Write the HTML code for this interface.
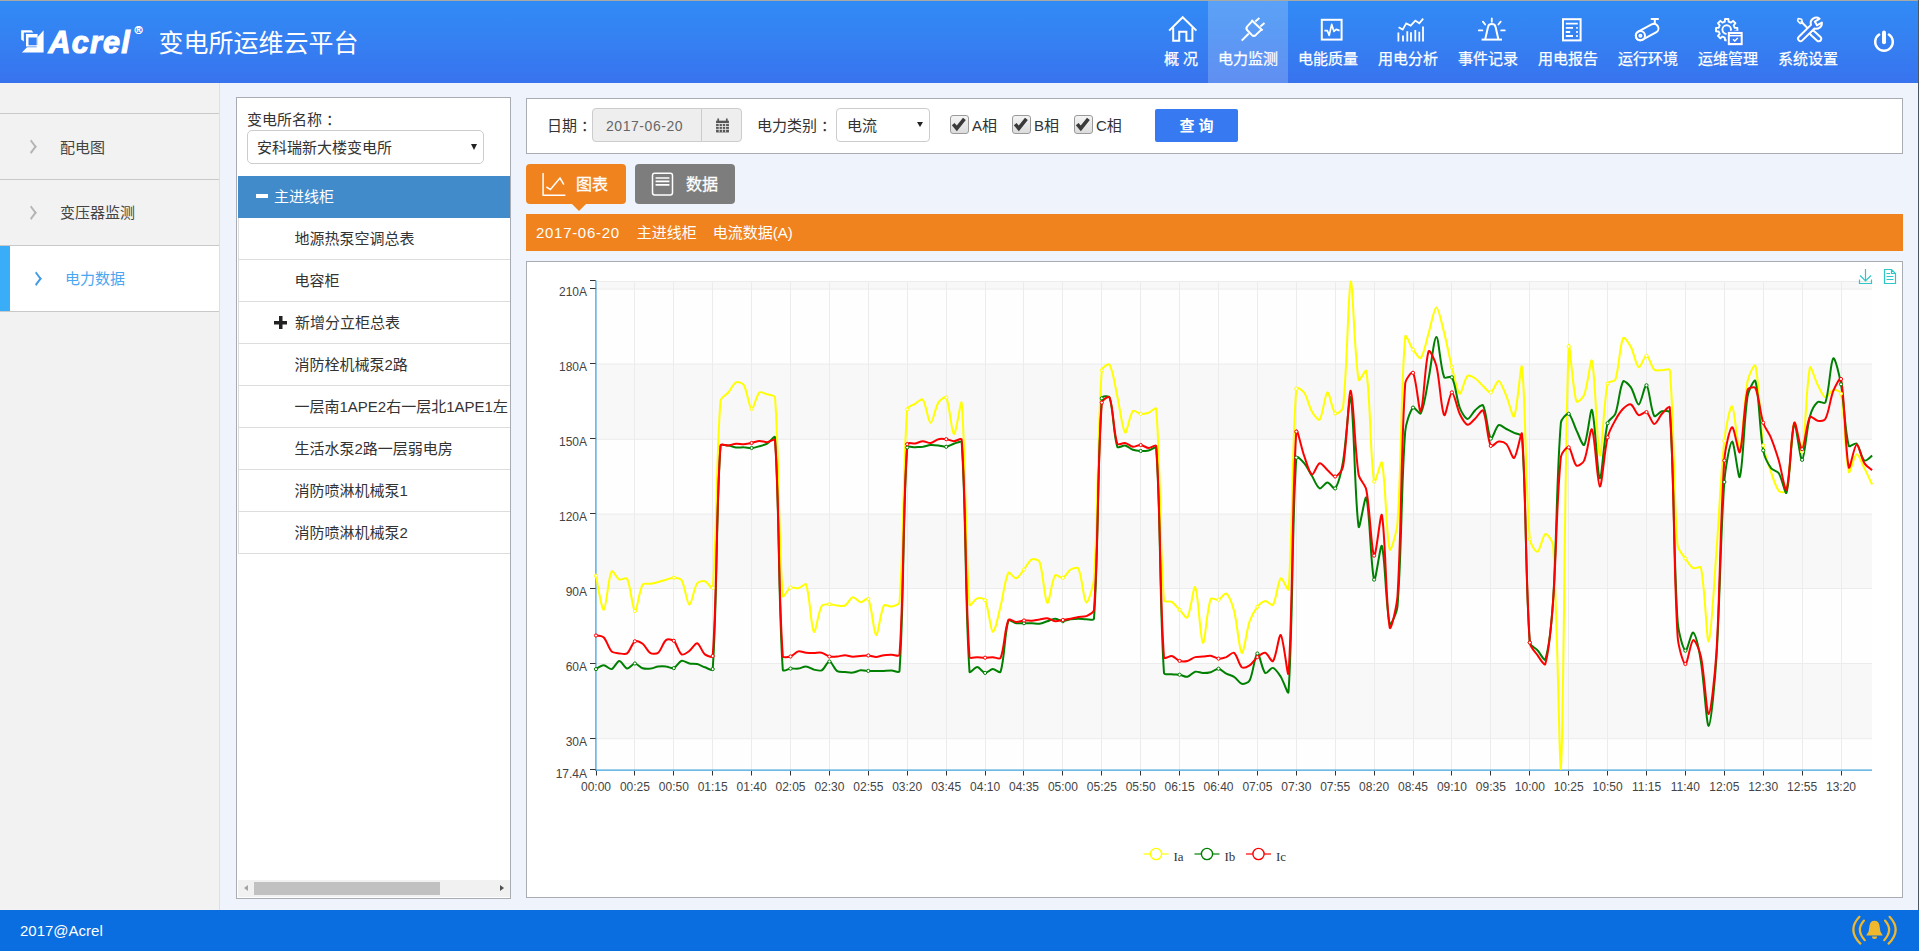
<!DOCTYPE html>
<html lang="zh-CN">
<head>
<meta charset="utf-8">
<title>变电所运维云平台</title>
<style>
*{box-sizing:border-box;margin:0;padding:0}
html,body{width:1919px;height:951px;overflow:hidden;background:#eff3fb}
body{font-family:"Liberation Sans","Noto Sans CJK SC",sans-serif;color:#333;font-size:15px}
#page{position:relative;width:1919px;height:951px;overflow:hidden;background:#eff3fb}
#header{position:absolute;left:0;top:0;width:1919px;height:83px;background:linear-gradient(180deg,#318bf5 0%,#3580f2 50%,#3873ee 100%)}
#topline{position:absolute;left:0;top:0;width:1919px;height:1px;background:#a9a9a4}
#logo{position:absolute;left:21px;top:0;height:83px;width:130px}
#logo svg{position:absolute;left:0;top:30px}
#logo .acrel{position:absolute;left:27.5px;top:22.8px;font:italic bold 30.6px/38px "Liberation Sans",sans-serif;color:#fff;letter-spacing:1.2px;-webkit-text-stroke:1.1px #fff}
#logo .reg{position:absolute;left:113.4px;top:22.4px;font:11px/16px "Liberation Sans",sans-serif;color:#fff;-webkit-text-stroke:0.35px #fff}
#title{position:absolute;left:158.5px;top:24.6px;font-size:25px;line-height:36px;color:#fff;white-space:nowrap}
.nav-item{position:absolute;top:1px;width:80px;height:82px;color:#fff;text-align:center}
.nav-item.active{background:rgba(255,255,255,0.2)}
.nav-ico{position:absolute;left:0;top:12px;width:100%;height:34px}
.nav-ico svg{display:block;margin:0 auto}
.nav-txt{position:absolute;left:0;top:47px;width:100%;-webkit-text-stroke:0.25px #fff;font-size:15px;line-height:22px;white-space:nowrap}
#power{position:absolute;left:1871px;top:29px;width:26px;height:26px}

#sidebar{position:absolute;left:0;top:83px;width:220px;height:827px;background:#f2f2f2;border-right:1px solid #dcdfe6}
.sitem{position:absolute;left:0;width:219px;height:66px;border-bottom:1px solid #c9c9c9}
.sitem:first-child{border-top:1px solid #c9c9c9;height:67px;top:30px !important}
.sitem:first-child .stxt{top:23px}
.sitem:first-child .chev{top:28px}
.sitem .stxt{position:absolute;left:60px;top:22px;font-size:15px;line-height:22px;color:#444;white-space:nowrap}
.sitem .chev{position:absolute;left:27px;top:27.5px;width:8.5px;height:8.5px;border-top:2.4px solid #b4b4b4;border-right:2.4px solid #b4b4b4;transform:rotate(45deg) skew(8deg,8deg)}
.sitem.act{background:#fff}
.sitem.act .sbar{position:absolute;left:0;top:0;width:10px;height:65px;background:#3aadf8}
.sitem.act .stxt{left:65px;color:#4aa6f0}
.sitem.act .chev{left:32px;border-color:#3f9be6}

#treepanel{position:absolute;left:236px;top:97px;width:275px;height:802px;background:#fff;border:1px solid #a9acb2;overflow:hidden}
.tlabel{position:absolute;left:10px;top:11px;font-size:15px;line-height:22px;color:#333;white-space:nowrap}
.tselect{position:absolute;left:10px;top:32px;width:237px;height:34px;border:1px solid #ccc;border-radius:5px;background:#fff}
.tselect span{position:absolute;left:9px;top:6px;font-size:15px;line-height:22px;color:#333;white-space:nowrap}
.caret{position:absolute;width:0;height:0;border-left:3.5px solid transparent;border-right:3.5px solid transparent;border-top:6px solid #222}
.tselect .caret{left:223px;top:13px}
.trow{position:absolute;left:1px;width:273px;height:42px;border-bottom:1px solid #ddd;border-left:1px solid #ddd;background:#fff}
.trow{top:0}
.trow.sel{background:#428bca;border-color:#428bca;color:#fff}
.trow .ttxt{position:absolute;top:10px;font-size:15px;line-height:22px;white-space:nowrap;color:#333}
.trow.sel .ttxt{color:#fff}
.tminus{position:absolute;left:17px;top:18px;width:12px;height:4px;background:#fff}
.tplus{position:absolute;left:35px;top:14px;width:13px;height:13px;background:
 linear-gradient(#222,#222) 0 5px/13px 3.5px no-repeat,
 linear-gradient(#222,#222) 5px 0/3.5px 13px no-repeat}
.hscroll{position:absolute;left:1px;top:782px;width:272px;height:17px;background:#f1f1f1}
.hscroll .thumb{position:absolute;left:16px;top:2px;width:186px;height:13px;background:#c1c1c1}
.hscroll .arl{position:absolute;left:6px;top:5px;width:0;height:0;border-top:3.5px solid transparent;border-bottom:3.5px solid transparent;border-right:4px solid #a3a3a3}
.hscroll .arr{position:absolute;left:262px;top:5px;width:0;height:0;border-top:3.5px solid transparent;border-bottom:3.5px solid transparent;border-left:4px solid #505050}

#filter{position:absolute;left:526px;top:98px;width:1377px;height:56px;background:#fff;border:1px solid #a9acb2}
.flabel{position:absolute;top:16px;font-size:15px;line-height:22px;color:#333;white-space:nowrap}
.dateinp{position:absolute;left:65px;top:9px;width:110px;height:34px;background:#eee;border:1px solid #ccc;border-radius:4px 0 0 4px}
.dateinp span{position:absolute;left:13px;top:7px;font-size:14px;line-height:20px;color:#666;letter-spacing:0.55px;white-space:nowrap}
.datebtn{position:absolute;left:174px;top:9px;width:41px;height:34px;background:#eee;border:1px solid #ccc;border-radius:0 4px 4px 0}
.datebtn svg{position:absolute;left:12.5px;top:9px}
.typesel{position:absolute;left:309px;top:9px;width:94px;height:34px;background:#fff;border:1px solid #ccc;border-radius:4px}
.typesel span{position:absolute;left:10px;top:6px;font-size:15px;line-height:22px;color:#333}
.typesel .caret{left:80px;top:13px;border-left-width:3px;border-right-width:3px;border-top-width:5.5px}
.cb{position:absolute;top:16px;width:19px;height:19px;border:1px solid #9a9a9a;border-radius:3px;background:linear-gradient(#f4f4f4,#dcdcdc)}
.cb svg{position:absolute;left:-1px;top:-1px}
.cblabel{position:absolute;top:16px;font-size:15px;line-height:22px;color:#333;white-space:nowrap}
.qbtn{position:absolute;left:628px;top:10px;width:83px;height:33px;background:#3679f0;border-radius:2px;color:#fff;font-size:15px;line-height:33px;text-align:center;font-weight:bold;white-space:pre}

.tab{position:absolute;top:164px;width:100px;height:40px;border-radius:4px;color:#fff}
.tab1{left:526px;background:#f0831e}
.tab2{left:635px;background:#7d7d7d}
.tab svg{position:absolute;top:8px}
.tab1 svg{left:15px}
.tab2 svg{left:16px}
.tab span{position:absolute;top:10px;-webkit-text-stroke:0.3px #fff;font-size:16px;line-height:22px;white-space:nowrap}
.tab1 span{left:50px}
.tab2 span{left:51px}
.tabarrow{position:absolute;left:572px;top:204px;width:0;height:0;border-left:7px solid transparent;border-right:7px solid transparent;border-top:7px solid #f0831e}
#obar{position:absolute;left:526px;top:214px;width:1377px;height:37px;background:#f0831e;color:#fff;font-size:15px;line-height:37px;padding-left:10px;white-space:nowrap}
#chartpanel{position:absolute;left:526px;top:261px;width:1377px;height:637px;background:#fff;border:1px solid #a9acb2}
#chartpanel svg{position:absolute;left:-1px;top:-1px}
#footer{position:absolute;left:0;top:910px;width:1919px;height:41px;background:#0a6de0}
#footer .copy{position:absolute;left:20px;top:10px;font-size:15px;line-height:22px;color:#fff}
#bell{position:absolute;left:1850px;top:4px;width:50px;height:36px}

#rline{position:absolute;left:1918px;top:0;width:1px;height:951px;background:#4b5661}

</style>
</head>
<body>
<div id="page">
  <div id="header">
    <div id="topline"></div>
    <div id="logo"><svg width="24" height="24" viewBox="0 0 24 24"><path d="M0.2,0.2 H10.4 L12.4,2.6 H2.8 V11.6 L0.2,9.4 Z" fill="#fff"/><path d="M5,4 H16.6 V16.4 H5 Z M7.5,7.5 V15.3 H15.7 V7.5 Z" fill="#fff" fill-rule="evenodd"/><path d="M22.6,0.2 V22.6 H0.9 L6,17.3 H15.7 V15.3 H16.6 V7.2 Z" fill="#fff"/></svg><span class="acrel">Acrel</span><span class="reg">®</span></div>
    <div id="title">变电所运维云平台</div>
    <div class="nav-item" style="left:1154px;width:54px"><div class="nav-ico"><svg width="40" height="34" viewBox="0 0 40 34" fill="none" stroke="#fff" stroke-width="2" stroke-linecap="butt" stroke-linejoin="miter"><path d="M8.9,16.9 L21.7,4.2 L34.7,16.9" stroke-linecap="square"/><path d="M12.2,14.5 V27.7 H18.2 V18.8 H25.4 V27.7 H31.4 V14.5"/></svg></div><div class="nav-txt">概 况</div></div>
<div class="nav-item active" style="left:1208px;width:80px"><div class="nav-ico"><svg width="40" height="34" viewBox="0 0 40 34" fill="none" stroke="#fff" stroke-width="2" stroke-linecap="butt" stroke-linejoin="miter"><path d="M13.7,27.6 L20.8,20.5" stroke-linecap="butt"/><path d="M23.4,7 L34.6,17.4" stroke-linecap="butt"/><path d="M24.4,7.8 L19.3,13.4 Q17.5,15.4 19.3,17.3 L23.8,21.9 Q25.8,23.8 27.9,21.9 L33.6,16.4" stroke-linejoin="round"/><path d="M27.3,8.5 L31.4,5 M32.4,13.5 L36.5,10" stroke-linecap="butt"/></svg></div><div class="nav-txt">电力监测</div></div>
<div class="nav-item" style="left:1288px;width:80px"><div class="nav-ico"><svg width="40" height="34" viewBox="0 0 40 34" fill="none" stroke="#fff" stroke-width="2" stroke-linecap="butt" stroke-linejoin="miter"><rect x="13.8" y="6.8" width="19.8" height="19.8"/><path d="M16.4,17.6 H19.3 L21.2,22.4 L23.7,11.4 L26,18.4 L28.2,16.4 L31.6,17.6" stroke-width="1.7" stroke-linejoin="round"/></svg></div><div class="nav-txt">电能质量</div></div>
<div class="nav-item" style="left:1368px;width:80px"><div class="nav-ico"><svg width="40" height="34" viewBox="0 0 40 34" fill="none" stroke="#fff" stroke-width="2" stroke-linecap="butt" stroke-linejoin="miter"><path d="M10.4,28.6 V19.4 M15,28.6 V22.6 M19.3,28.6 V18.2 M23,28.6 V19.2 M27.3,28.6 V17 M31.3,28.6 V18.8 M35,28.6 V13.4" stroke-width="1.8"/><path d="M10.6,14.2 L14.7,16.6 L18.2,10.4 L22.7,12.6 L27.3,7.6 L31.3,10.3 L35.2,5.6" stroke-width="1.8"/></svg></div><div class="nav-txt">用电分析</div></div>
<div class="nav-item" style="left:1448px;width:80px"><div class="nav-ico"><svg width="40" height="34" viewBox="0 0 40 34" fill="none" stroke="#fff" stroke-width="2" stroke-linecap="butt" stroke-linejoin="miter"><path d="M13.6,26.6 H34"/><path d="M17.2,26.4 L20,14 Q20.4,11 23.8,11 Q27.2,11 27.6,14 L30.4,26.4" /><path d="M23.8,5.4 V8.8 M14.9,8.6 L17.2,11.5 M32.7,8.6 L30.4,11.5 M10.8,17.4 H14.4 M33.2,17.4 H36.8" stroke-width="1.8" stroke-linecap="round"/></svg></div><div class="nav-txt">事件记录</div></div>
<div class="nav-item" style="left:1528px;width:80px"><div class="nav-ico"><svg width="40" height="34" viewBox="0 0 40 34" fill="none" stroke="#fff" stroke-width="2" stroke-linecap="butt" stroke-linejoin="miter"><rect x="15" y="6.2" width="17.6" height="21.2"/><path d="M17.8,10.6 H29.8 M17.8,14.9 H25 M28.2,14.9 H29.8 M17.8,19 H22.2 M28.2,19 H29.8 M17.8,23 H25 M28.2,23 H29.8" stroke-width="1.8"/></svg></div><div class="nav-txt">用电报告</div></div>
<div class="nav-item" style="left:1608px;width:80px"><div class="nav-ico"><svg width="40" height="34" viewBox="0 0 40 34" fill="none" stroke="#fff" stroke-width="2" stroke-linecap="butt" stroke-linejoin="miter"><path d="M14.60,26.74 L28.00,19.44 A4.6,4.6 0 0 0 23.60,11.36 L10.20,18.66 A4.6,4.6 0 0 0 14.60,26.74Z"/><circle cx="12.4" cy="22.7" r="4.6"/><circle cx="12.4" cy="22.7" r="1.1" stroke-width="1.8"/><path d="M26.8,11.2 V5.9 M22.8,5.9 H30.8"/></svg></div><div class="nav-txt">运行环境</div></div>
<div class="nav-item" style="left:1688px;width:80px"><div class="nav-ico"><svg width="40" height="36" viewBox="0 0 40 36" fill="none" stroke="#fff" stroke-width="2" stroke-linecap="butt" stroke-linejoin="miter"><path d="M26.67,14.69 L29.37,14.91 L29.37,18.29 L26.67,18.51 L25.69,20.88 L27.44,22.95 L25.05,25.34 L22.98,23.59 L20.61,24.57 L20.39,27.27 L17.01,27.27 L16.79,24.57 L14.42,23.59 L12.35,25.34 L9.96,22.95 L11.71,20.88 L10.73,18.51 L8.03,18.29 L8.03,14.91 L10.73,14.69 L11.71,12.32 L9.96,10.25 L12.35,7.86 L14.42,9.61 L16.79,8.63 L17.01,5.93 L20.39,5.93 L20.61,8.63 L22.98,9.61 L25.05,7.86 L27.44,10.25 L25.69,12.32Z" stroke-width="1.9" stroke-linejoin="round"/><circle cx="18.7" cy="16.6" r="4.3" stroke-width="1.9"/><rect x="18.6" y="17.8" width="17.3" height="15.6" fill="#3979f1" stroke="none"/><rect x="19.8" y="18.9" width="14.9" height="13.3" fill="#fff" stroke="none"/><rect x="21.8" y="21" width="10.9" height="0.9" fill="#3979f1" stroke="none"/><rect x="21.8" y="23.4" width="10.9" height="6.6" fill="#3979f1" stroke="none"/><path d="M25,26.2 L26.8,28 L29.8,24.9" stroke-width="1.5"/></svg></div><div class="nav-txt">运维管理</div></div>
<div class="nav-item" style="left:1768px;width:80px"><div class="nav-ico"><svg width="40" height="34" viewBox="0 0 40 34" fill="none" stroke="#fff" stroke-width="2" stroke-linecap="butt" stroke-linejoin="miter"><path d="M22.92,22.06 L29.12,27.66 A2.5,2.5 0 0 0 32.48,23.94 L26.28,18.34 A2.5,2.5 0 0 0 22.92,22.06Z"/><path d="M22.6,18.2 L12.8,8.2" stroke-width="2"/><path d="M10.2,5.4 L13.6,6.2 L14.6,9.6 L12.4,10.6 L9.6,7.8 Z" stroke-width="1.5" stroke-linejoin="round"/><path d="M31.66,5.72 A5.6,5.6 0 0 0 22.99,11.9 L10.85,23.8 A2.5,2.5 0 0 0 14.35,27.39 L26.49,15.49 A5.6,5.6 0 0 0 33.86,9.53 L28.97,12.35 L26.77,8.55 Z" fill="#3a7af2" stroke-linejoin="round"/></svg></div><div class="nav-txt">系统设置</div></div>
    <div id="power"><svg width="26" height="26" viewBox="0 0 26 26" fill="none" stroke="#fff"><path d="M8.2,5.6 A8.8,8.8 0 1 0 17.8,5.6" stroke-width="2.4" stroke-linecap="round"/><path d="M13,3.4 V13.2" stroke-width="4" stroke-linecap="round"/></svg></div>
  </div>

  <div id="sidebar">
    <div class="sitem" style="top:31px"><span class="chev"></span><span class="stxt">配电图</span></div>
    <div class="sitem" style="top:97px"><span class="chev"></span><span class="stxt">变压器监测</span></div>
    <div class="sitem act" style="top:163px"><span class="sbar"></span><span class="chev"></span><span class="stxt">电力数据</span></div>
  </div>

  <div id="treepanel">
    <div class="tlabel">变电所名称<span style="margin-left:4px">：</span></div>
    <div class="tselect"><span>安科瑞新大楼变电所</span><i class="caret"></i></div>
    <div class="trow sel" style="top:78px"><span class="tminus"></span><span class="ttxt" style="left:35px">主进线柜</span></div>
<div class="trow" style="top:120px"><span class="ttxt" style="left:55.5px">地源热泵空调总表</span></div>
<div class="trow" style="top:162px"><span class="ttxt" style="left:55.5px">电容柜</span></div>
<div class="trow" style="top:204px"><span class="tplus"></span><span class="ttxt" style="left:56px">新增分立柜总表</span></div>
<div class="trow" style="top:246px"><span class="ttxt" style="left:55.5px">消防栓机械泵2路</span></div>
<div class="trow" style="top:288px"><span class="ttxt" style="left:55.5px">一层南1APE2右一层北1APE1左</span></div>
<div class="trow" style="top:330px"><span class="ttxt" style="left:55.5px">生活水泵2路一层弱电房</span></div>
<div class="trow" style="top:372px"><span class="ttxt" style="left:55.5px">消防喷淋机械泵1</span></div>
<div class="trow" style="top:414px"><span class="ttxt" style="left:55.5px">消防喷淋机械泵2</span></div>
    <div class="hscroll"><i class="arl"></i><b class="thumb"></b><i class="arr"></i></div>
  </div>

  <div id="filter">
    <span class="flabel" style="left:20px">日期<span style="margin-left:4px">：</span></span>
    <div class="dateinp"><span>2017-06-20</span></div>
    <div class="datebtn"><svg width="15" height="15" viewBox="0 0 14 14"><path d="M1 2.5h12v11H1z" fill="#555"/><path d="M3 0.5v3M11 0.5v3" stroke="#555" stroke-width="1.6"/><path d="M1 5.2h12" stroke="#eee" stroke-width="0.9"/><path d="M3.9 5.2v8M6.9 5.2v8M9.9 5.2v8M1 7.9h12M1 10.6h12" stroke="#eee" stroke-width="0.8"/></svg></div>
    <span class="flabel" style="left:230px">电力类别<span style="margin-left:4px">：</span></span>
    <div class="typesel"><span>电流</span><i class="caret"></i></div>
    <span class="cb" style="left:423px"><svg width="18" height="18" viewBox="0 0 18 18"><path d="M3.2 9.2l3.6 4.2 7.6-9.6" fill="none" stroke="#3a3a3a" stroke-width="3.6"/></svg></span><span class="cblabel" style="left:445px">A相</span>
    <span class="cb" style="left:485px"><svg width="18" height="18" viewBox="0 0 18 18"><path d="M3.2 9.2l3.6 4.2 7.6-9.6" fill="none" stroke="#3a3a3a" stroke-width="3.6"/></svg></span><span class="cblabel" style="left:507px">B相</span>
    <span class="cb" style="left:547px"><svg width="18" height="18" viewBox="0 0 18 18"><path d="M3.2 9.2l3.6 4.2 7.6-9.6" fill="none" stroke="#3a3a3a" stroke-width="3.6"/></svg></span><span class="cblabel" style="left:569px">C相</span>
    <div class="qbtn">查 询</div>
  </div>

  <div class="tab tab1"><svg width="26" height="25" viewBox="0 0 26 25"><path d="M2.1,1V23.3H24.4" fill="none" stroke="#fff" stroke-width="1.5"/><path d="M5.4,15L9.4,17.6L19,6L22.9,12.6" fill="none" stroke="#fff" stroke-width="1.5"/></svg><span>图表</span></div>
  <div class="tabarrow"></div>
  <div class="tab tab2"><svg width="23" height="25" viewBox="0 0 23 25"><rect x="1.5" y="1.2" width="20" height="21.8" rx="2.2" fill="none" stroke="#fff" stroke-width="1.5"/><path d="M4.6,6H18.4M4.6,9.4H18.4M4.6,12.8H18.4" stroke="#fff" stroke-width="1.7"/></svg><span>数据</span></div>

  <div id="obar"><span style="letter-spacing:0.7px">2017-06-20</span><span style="margin-left:17px">主进线柜</span><span style="margin-left:16px">电流数据(A)</span></div>

  <div id="chartpanel">
<svg width="1377" height="637" viewBox="526 261 1377 637" font-family="'Liberation Sans','Noto Sans CJK SC',sans-serif" font-size="12">
<rect x="596" y="281.00" width="1276" height="8.10" fill="#f8f8f8"/>
<rect x="596" y="289.10" width="1276" height="75.00" fill="#fefefe"/>
<rect x="596" y="364.10" width="1276" height="75.20" fill="#f8f8f8"/>
<rect x="596" y="439.30" width="1276" height="74.80" fill="#fefefe"/>
<rect x="596" y="514.10" width="1276" height="74.40" fill="#f8f8f8"/>
<rect x="596" y="588.50" width="1276" height="75.00" fill="#fefefe"/>
<rect x="596" y="663.50" width="1276" height="75.20" fill="#f8f8f8"/>
<rect x="596" y="738.70" width="1276" height="31.30" fill="#fefefe"/>
<path d="M596,289.10H1872" stroke="#ececec" stroke-width="1"/>
<path d="M596,364.10H1872" stroke="#ececec" stroke-width="1"/>
<path d="M596,439.30H1872" stroke="#ececec" stroke-width="1"/>
<path d="M596,514.10H1872" stroke="#ececec" stroke-width="1"/>
<path d="M596,588.50H1872" stroke="#ececec" stroke-width="1"/>
<path d="M596,663.50H1872" stroke="#ececec" stroke-width="1"/>
<path d="M596,738.70H1872" stroke="#ececec" stroke-width="1"/>
<path d="M596,281.5H1872" stroke="#ececec" stroke-width="1"/>
<path d="M634.5,281V770" stroke="#ececec" stroke-width="1"/>
<path d="M673.5,281V770" stroke="#ececec" stroke-width="1"/>
<path d="M712.5,281V770" stroke="#ececec" stroke-width="1"/>
<path d="M751.5,281V770" stroke="#ececec" stroke-width="1"/>
<path d="M790.5,281V770" stroke="#ececec" stroke-width="1"/>
<path d="M829.5,281V770" stroke="#ececec" stroke-width="1"/>
<path d="M868.5,281V770" stroke="#ececec" stroke-width="1"/>
<path d="M907.5,281V770" stroke="#ececec" stroke-width="1"/>
<path d="M946.5,281V770" stroke="#ececec" stroke-width="1"/>
<path d="M985.5,281V770" stroke="#ececec" stroke-width="1"/>
<path d="M1023.5,281V770" stroke="#ececec" stroke-width="1"/>
<path d="M1062.5,281V770" stroke="#ececec" stroke-width="1"/>
<path d="M1101.5,281V770" stroke="#ececec" stroke-width="1"/>
<path d="M1140.5,281V770" stroke="#ececec" stroke-width="1"/>
<path d="M1179.5,281V770" stroke="#ececec" stroke-width="1"/>
<path d="M1218.5,281V770" stroke="#ececec" stroke-width="1"/>
<path d="M1257.5,281V770" stroke="#ececec" stroke-width="1"/>
<path d="M1296.5,281V770" stroke="#ececec" stroke-width="1"/>
<path d="M1335.5,281V770" stroke="#ececec" stroke-width="1"/>
<path d="M1374.5,281V770" stroke="#ececec" stroke-width="1"/>
<path d="M1413.5,281V770" stroke="#ececec" stroke-width="1"/>
<path d="M1451.5,281V770" stroke="#ececec" stroke-width="1"/>
<path d="M1490.5,281V770" stroke="#ececec" stroke-width="1"/>
<path d="M1529.5,281V770" stroke="#ececec" stroke-width="1"/>
<path d="M1568.5,281V770" stroke="#ececec" stroke-width="1"/>
<path d="M1607.5,281V770" stroke="#ececec" stroke-width="1"/>
<path d="M1646.5,281V770" stroke="#ececec" stroke-width="1"/>
<path d="M1685.5,281V770" stroke="#ececec" stroke-width="1"/>
<path d="M1724.5,281V770" stroke="#ececec" stroke-width="1"/>
<path d="M1763.5,281V770" stroke="#ececec" stroke-width="1"/>
<path d="M1802.5,281V770" stroke="#ececec" stroke-width="1"/>
<path d="M1841.5,281V770" stroke="#ececec" stroke-width="1"/>
<path d="M595.9,280.5V771" stroke="#3f9fdc" stroke-width="1.25"/>
<path d="M595,770H1872" stroke="#3f9fdc" stroke-width="1.25"/>
<path d="M590,288.50H595.6" stroke="#333" stroke-width="1"/>
<text x="587" y="296.30" text-anchor="end" fill="#444">210A</text>
<path d="M590,363.50H595.6" stroke="#333" stroke-width="1"/>
<text x="587" y="371.33" text-anchor="end" fill="#444">180A</text>
<path d="M590,438.50H595.6" stroke="#333" stroke-width="1"/>
<text x="587" y="446.36" text-anchor="end" fill="#444">150A</text>
<path d="M590,513.50H595.6" stroke="#333" stroke-width="1"/>
<text x="587" y="521.39" text-anchor="end" fill="#444">120A</text>
<path d="M590,588.50H595.6" stroke="#333" stroke-width="1"/>
<text x="587" y="596.42" text-anchor="end" fill="#444">90A</text>
<path d="M590,663.50H595.6" stroke="#333" stroke-width="1"/>
<text x="587" y="671.45" text-anchor="end" fill="#444">60A</text>
<path d="M590,738.50H595.6" stroke="#333" stroke-width="1"/>
<text x="587" y="746.48" text-anchor="end" fill="#444">30A</text>
<path d="M590,769.50H595.6" stroke="#333" stroke-width="1"/>
<text x="587" y="777.60" text-anchor="end" fill="#444">17.4A</text>
<path d="M590,280.5H595.6" stroke="#333" stroke-width="1"/>
<path d="M596.5,771V775.5" stroke="#333" stroke-width="1"/>
<text x="596.0" y="791" text-anchor="middle" fill="#444">00:00</text>
<path d="M634.5,771V775.5" stroke="#333" stroke-width="1"/>
<text x="634.9" y="791" text-anchor="middle" fill="#444">00:25</text>
<path d="M673.5,771V775.5" stroke="#333" stroke-width="1"/>
<text x="673.8" y="791" text-anchor="middle" fill="#444">00:50</text>
<path d="M712.5,771V775.5" stroke="#333" stroke-width="1"/>
<text x="712.7" y="791" text-anchor="middle" fill="#444">01:15</text>
<path d="M751.5,771V775.5" stroke="#333" stroke-width="1"/>
<text x="751.6" y="791" text-anchor="middle" fill="#444">01:40</text>
<path d="M790.5,771V775.5" stroke="#333" stroke-width="1"/>
<text x="790.5" y="791" text-anchor="middle" fill="#444">02:05</text>
<path d="M829.5,771V775.5" stroke="#333" stroke-width="1"/>
<text x="829.4" y="791" text-anchor="middle" fill="#444">02:30</text>
<path d="M868.5,771V775.5" stroke="#333" stroke-width="1"/>
<text x="868.3" y="791" text-anchor="middle" fill="#444">02:55</text>
<path d="M907.5,771V775.5" stroke="#333" stroke-width="1"/>
<text x="907.2" y="791" text-anchor="middle" fill="#444">03:20</text>
<path d="M946.5,771V775.5" stroke="#333" stroke-width="1"/>
<text x="946.2" y="791" text-anchor="middle" fill="#444">03:45</text>
<path d="M985.5,771V775.5" stroke="#333" stroke-width="1"/>
<text x="985.1" y="791" text-anchor="middle" fill="#444">04:10</text>
<path d="M1023.5,771V775.5" stroke="#333" stroke-width="1"/>
<text x="1024.0" y="791" text-anchor="middle" fill="#444">04:35</text>
<path d="M1062.5,771V775.5" stroke="#333" stroke-width="1"/>
<text x="1062.9" y="791" text-anchor="middle" fill="#444">05:00</text>
<path d="M1101.5,771V775.5" stroke="#333" stroke-width="1"/>
<text x="1101.8" y="791" text-anchor="middle" fill="#444">05:25</text>
<path d="M1140.5,771V775.5" stroke="#333" stroke-width="1"/>
<text x="1140.7" y="791" text-anchor="middle" fill="#444">05:50</text>
<path d="M1179.5,771V775.5" stroke="#333" stroke-width="1"/>
<text x="1179.6" y="791" text-anchor="middle" fill="#444">06:15</text>
<path d="M1218.5,771V775.5" stroke="#333" stroke-width="1"/>
<text x="1218.5" y="791" text-anchor="middle" fill="#444">06:40</text>
<path d="M1257.5,771V775.5" stroke="#333" stroke-width="1"/>
<text x="1257.4" y="791" text-anchor="middle" fill="#444">07:05</text>
<path d="M1296.5,771V775.5" stroke="#333" stroke-width="1"/>
<text x="1296.3" y="791" text-anchor="middle" fill="#444">07:30</text>
<path d="M1335.5,771V775.5" stroke="#333" stroke-width="1"/>
<text x="1335.2" y="791" text-anchor="middle" fill="#444">07:55</text>
<path d="M1374.5,771V775.5" stroke="#333" stroke-width="1"/>
<text x="1374.1" y="791" text-anchor="middle" fill="#444">08:20</text>
<path d="M1413.5,771V775.5" stroke="#333" stroke-width="1"/>
<text x="1413.0" y="791" text-anchor="middle" fill="#444">08:45</text>
<path d="M1451.5,771V775.5" stroke="#333" stroke-width="1"/>
<text x="1451.9" y="791" text-anchor="middle" fill="#444">09:10</text>
<path d="M1490.5,771V775.5" stroke="#333" stroke-width="1"/>
<text x="1490.8" y="791" text-anchor="middle" fill="#444">09:35</text>
<path d="M1529.5,771V775.5" stroke="#333" stroke-width="1"/>
<text x="1529.8" y="791" text-anchor="middle" fill="#444">10:00</text>
<path d="M1568.5,771V775.5" stroke="#333" stroke-width="1"/>
<text x="1568.7" y="791" text-anchor="middle" fill="#444">10:25</text>
<path d="M1607.5,771V775.5" stroke="#333" stroke-width="1"/>
<text x="1607.6" y="791" text-anchor="middle" fill="#444">10:50</text>
<path d="M1646.5,771V775.5" stroke="#333" stroke-width="1"/>
<text x="1646.5" y="791" text-anchor="middle" fill="#444">11:15</text>
<path d="M1685.5,771V775.5" stroke="#333" stroke-width="1"/>
<text x="1685.4" y="791" text-anchor="middle" fill="#444">11:40</text>
<path d="M1724.5,771V775.5" stroke="#333" stroke-width="1"/>
<text x="1724.3" y="791" text-anchor="middle" fill="#444">12:05</text>
<path d="M1763.5,771V775.5" stroke="#333" stroke-width="1"/>
<text x="1763.2" y="791" text-anchor="middle" fill="#444">12:30</text>
<path d="M1802.5,771V775.5" stroke="#333" stroke-width="1"/>
<text x="1802.1" y="791" text-anchor="middle" fill="#444">12:55</text>
<path d="M1841.5,771V775.5" stroke="#333" stroke-width="1"/>
<text x="1841.0" y="791" text-anchor="middle" fill="#444">13:20</text>
<path d="M596.0,575.7C596.0,575.7 601.6,610.4 603.8,609.8C606.2,609.1 607.9,578.5 611.6,571.4C612.6,569.4 616.6,578.2 619.3,579.5C621.3,580.4 626.2,576.9 627.1,578.7C630.9,586.4 632.4,610.1 634.9,611.0C637.0,611.8 639.0,590.9 642.7,584.5C643.7,582.7 648.2,584.2 650.5,583.8C652.8,583.4 655.9,582.6 658.2,582.0C660.6,581.4 663.7,580.4 666.0,579.7C668.4,579.1 671.5,577.7 673.8,577.7C676.2,577.8 680.5,578.3 681.6,580.3C685.1,586.4 686.9,604.3 689.4,604.7C691.6,605.2 693.7,588.5 697.2,583.3C698.4,581.4 702.9,580.7 704.9,581.3C707.5,582.0 712.5,590.6 712.7,587.8C717.1,536.5 716.1,456.1 720.5,400.8C720.8,397.5 726.1,395.1 728.3,392.5C730.7,389.6 733.2,383.8 736.1,382.4C737.9,381.5 742.7,383.0 743.8,384.9C747.4,390.9 748.9,407.6 751.6,408.9C753.6,409.8 756.2,395.5 759.4,392.5C760.8,391.2 764.9,393.5 767.2,394.3C769.6,395.0 774.8,395.1 775.0,397.5C779.4,455.6 778.3,542.0 782.8,595.9C783.0,599.0 787.8,588.9 790.5,587.6C792.4,586.6 796.1,588.8 798.3,588.3C800.8,587.9 805.4,582.5 806.1,584.5C810.0,595.6 810.9,627.6 813.9,631.7C815.6,634.1 818.1,612.4 821.7,606.0C822.7,604.1 827.1,604.3 829.4,604.2C831.8,604.2 834.9,605.3 837.2,605.5C839.5,605.7 843.1,606.5 845.0,605.5C847.8,604.0 850.2,597.7 852.8,597.2C854.9,596.7 858.1,601.9 860.6,602.2C862.8,602.5 867.5,597.1 868.3,598.9C872.1,606.9 873.6,633.9 876.1,635.0C878.2,635.9 880.2,612.3 883.9,605.5C884.9,603.7 889.5,607.0 891.7,606.5C894.2,606.0 899.3,604.8 899.5,602.2C903.9,545.7 902.8,466.1 907.2,409.4C907.5,406.6 912.6,405.4 915.0,403.8C917.3,402.4 921.6,398.0 922.8,399.6C926.2,403.7 928.1,422.3 930.6,422.8C932.8,423.2 935.1,407.9 938.4,402.6C939.8,400.3 945.2,395.7 946.2,397.5C949.9,405.1 951.4,433.2 953.9,434.1C956.1,434.9 961.1,396.1 961.7,403.1C965.7,447.3 965.1,548.9 969.5,604.7C969.7,607.5 974.7,599.2 977.3,598.4C979.4,597.8 984.1,598.2 985.1,600.2C988.8,608.2 990.3,630.8 992.8,631.7C995.0,632.5 998.6,613.9 1000.6,606.1C1003.2,596.2 1004.8,579.3 1008.4,572.8C1009.4,571.0 1014.1,578.8 1016.2,578.3C1018.8,577.8 1021.7,572.2 1024.0,569.5C1026.4,566.5 1028.9,560.8 1031.8,559.4C1033.6,558.5 1038.8,559.8 1039.5,561.9C1043.4,572.8 1044.5,600.4 1047.3,602.8C1049.2,604.4 1051.5,581.1 1055.1,575.3C1056.1,573.6 1060.9,578.6 1062.9,577.8C1065.6,576.8 1067.9,571.1 1070.7,569.5C1072.6,568.4 1077.6,566.9 1078.4,568.7C1082.2,576.8 1083.5,600.6 1086.2,602.3C1088.2,603.5 1093.5,585.8 1094.0,578.3C1098.2,516.2 1097.3,431.5 1101.8,370.3C1102.0,367.5 1108.5,363.0 1109.6,364.7C1113.2,370.8 1115.2,386.8 1117.3,396.3C1119.8,407.1 1122.2,429.7 1125.1,432.4C1126.9,434.0 1129.5,415.0 1132.9,410.9C1134.2,409.4 1138.3,413.7 1140.7,413.9C1143.0,414.2 1146.2,413.4 1148.5,412.7C1150.9,411.9 1156.0,406.5 1156.2,408.9C1160.7,462.7 1159.5,544.7 1164.0,600.3C1164.2,602.6 1169.9,600.6 1171.8,601.8C1174.5,603.5 1177.2,607.5 1179.6,609.9C1181.9,612.2 1186.2,619.2 1187.4,617.4C1190.8,612.4 1193.5,584.5 1195.2,587.2C1198.2,592.0 1200.3,640.7 1202.9,642.7C1205.0,644.3 1206.7,610.0 1210.7,599.0C1211.4,597.1 1216.5,600.5 1218.5,599.8C1221.1,598.8 1224.7,592.3 1226.3,593.5C1229.4,595.7 1232.6,605.6 1234.1,611.1C1237.3,623.4 1239.2,651.1 1241.8,652.8C1243.9,654.1 1246.5,630.4 1249.6,621.2C1251.2,616.6 1254.5,610.6 1257.4,606.8C1259.1,604.6 1262.7,601.4 1265.2,601.0C1267.4,600.8 1271.9,606.5 1273.0,604.8C1276.5,599.6 1277.6,581.5 1280.8,578.3C1282.3,576.8 1288.2,592.7 1288.5,589.2C1292.9,535.8 1291.8,445.3 1296.3,388.7C1296.5,386.3 1302.7,390.5 1304.1,392.5C1307.4,397.3 1308.9,406.2 1311.9,411.4C1313.5,414.3 1318.3,421.1 1319.7,419.5C1323.0,415.4 1324.8,393.5 1327.4,392.5C1329.5,391.7 1332.0,410.3 1335.2,413.4C1336.6,414.8 1342.7,410.5 1343.0,407.6C1347.3,370.9 1348.2,286.1 1350.8,281.5C1352.8,281.0 1354.4,355.9 1358.6,379.9C1359.1,382.7 1365.9,368.1 1366.3,371.0C1370.6,398.6 1370.2,458.4 1374.1,481.6C1374.9,485.9 1381.0,458.8 1381.9,462.6C1385.7,479.1 1386.1,535.6 1389.7,549.3C1390.8,553.7 1396.9,531.0 1397.5,522.8C1401.5,467.2 1400.9,384.5 1405.2,336.5C1405.6,332.5 1410.4,345.9 1413.0,349.6C1415.0,352.3 1419.4,359.4 1420.8,357.9C1424.1,354.5 1426.3,340.6 1428.6,333.2C1431.0,325.5 1434.0,307.5 1436.4,307.4C1438.7,307.4 1442.1,325.3 1444.2,333.1C1446.8,343.2 1449.3,357.0 1451.9,367.2C1454.0,375.2 1457.0,392.1 1459.7,393.7C1461.6,394.7 1464.2,379.2 1467.5,376.0C1468.9,374.6 1473.3,377.2 1475.3,378.5C1477.9,380.2 1480.6,383.9 1483.1,386.1C1485.3,388.1 1488.9,393.0 1490.8,392.4C1493.5,391.5 1496.5,380.5 1498.6,381.0C1501.2,381.7 1504.4,391.5 1506.4,396.2C1509.0,402.1 1512.8,419.0 1514.2,416.4C1517.4,410.3 1520.9,358.9 1522.0,367.2C1525.6,395.7 1525.5,488.1 1529.8,539.1C1530.1,543.5 1535.5,552.4 1537.5,551.7C1540.2,550.9 1542.6,535.2 1545.3,534.1C1547.3,533.3 1552.8,541.3 1553.1,545.4C1557.5,611.8 1559.3,770.0 1560.9,769.0C1563.9,730.0 1564.5,444.0 1568.7,346.5C1569.2,333.7 1572.5,388.9 1576.4,401.2C1577.2,403.5 1583.2,397.6 1584.2,394.9C1587.8,385.5 1590.7,356.0 1592.0,360.9C1595.4,374.1 1597.1,451.6 1599.8,455.5C1601.8,458.4 1603.4,403.9 1607.6,383.6C1608.1,381.1 1614.6,382.1 1615.3,379.8C1619.2,368.5 1619.5,345.8 1623.1,338.1C1624.1,336.0 1629.3,343.9 1630.9,347.0C1633.9,352.6 1635.8,365.5 1638.7,367.2C1640.5,368.2 1644.3,355.5 1646.5,355.8C1649.0,356.2 1651.1,366.8 1654.2,369.7C1655.8,371.1 1659.7,370.1 1662.0,370.2C1664.4,370.3 1669.6,368.0 1669.8,370.2C1674.3,420.5 1673.3,493.4 1677.6,545.4C1678.0,549.9 1682.8,554.8 1685.4,558.5C1687.5,561.6 1690.3,566.5 1693.2,568.1C1695.0,569.2 1700.5,565.5 1700.9,567.6C1705.2,587.5 1706.6,643.6 1708.7,641.3C1711.3,638.5 1714.4,577.7 1716.5,550.5C1719.1,517.6 1720.8,473.6 1724.3,440.9C1725.4,430.3 1730.0,405.0 1732.1,406.3C1734.7,407.9 1738.0,453.4 1739.8,450.4C1742.7,445.8 1743.9,401.4 1747.6,381.0C1748.5,376.1 1754.6,362.5 1755.4,365.9C1759.3,381.8 1759.7,421.8 1763.2,445.4C1764.4,453.6 1768.3,464.1 1771.0,471.9C1773.0,477.7 1775.4,486.7 1778.8,490.8C1780.0,492.4 1786.1,492.9 1786.5,490.8C1790.7,472.5 1791.1,430.8 1794.3,422.7C1795.7,419.1 1800.9,456.0 1802.1,451.7C1805.5,439.5 1806.1,384.1 1809.9,367.7C1810.7,364.0 1815.0,379.8 1817.7,384.8C1819.7,388.8 1822.7,396.6 1825.4,397.4C1827.4,398.1 1830.6,390.5 1833.2,389.9C1835.3,389.4 1840.5,391.2 1841.0,393.7C1845.2,415.8 1845.0,457.3 1848.8,471.9C1849.7,475.5 1854.0,454.8 1856.6,454.2C1858.7,453.7 1862.2,463.9 1864.3,468.1C1866.8,472.9 1872.1,484.5 1872.1,484.5" fill="none" stroke="#ffff00" stroke-width="2" stroke-linejoin="round"/>
<path d="M596.0,669.1C596.0,669.1 601.4,665.3 603.8,665.3C606.1,665.3 609.5,669.6 611.6,669.1C614.2,668.4 617.0,661.1 619.3,661.0C621.6,660.9 624.6,668.2 627.1,668.6C629.3,668.9 632.6,663.6 634.9,663.5C637.2,663.5 640.2,667.5 642.7,668.3C644.8,669.0 648.2,668.8 650.5,668.6C652.8,668.3 655.9,666.9 658.2,666.6C660.5,666.3 663.7,666.3 666.0,666.6C668.4,666.8 671.8,668.8 673.8,668.1C676.5,667.1 679.0,661.5 681.6,660.8C683.6,660.2 687.0,663.0 689.4,663.5C691.6,664.0 694.9,663.5 697.2,664.0C699.6,664.6 702.5,666.5 704.9,667.3C707.2,668.1 712.6,671.4 712.7,669.1C717.2,605.0 716.0,510.8 720.5,446.0C720.7,443.7 726.0,445.3 728.3,445.5C730.7,445.7 733.7,447.2 736.1,447.5C738.4,447.8 741.5,447.2 743.8,447.3C746.2,447.3 749.3,448.2 751.6,448.0C754.0,447.9 757.1,446.9 759.4,446.2C761.8,445.6 765.1,444.9 767.2,443.7C769.8,442.3 774.8,434.6 775.0,437.4C779.4,502.4 778.2,602.8 782.8,669.8C782.9,672.1 788.2,668.8 790.5,668.6C792.9,668.4 796.0,668.9 798.3,668.6C800.7,668.3 803.8,666.4 806.1,666.6C808.5,666.7 811.5,669.0 813.9,669.6C816.1,670.1 819.8,671.3 821.7,670.3C824.5,668.9 827.2,661.4 829.4,661.5C831.8,661.6 834.4,669.2 837.2,671.1C839.0,672.3 842.7,671.9 845.0,672.1C847.3,672.3 850.5,672.9 852.8,672.6C855.2,672.3 858.2,670.6 860.6,670.3C862.9,670.1 866.0,670.7 868.3,670.9C870.7,671.0 873.8,671.1 876.1,671.1C878.5,671.1 881.6,670.9 883.9,670.9C886.2,670.8 889.4,670.6 891.7,670.6C894.0,670.6 899.3,673.4 899.5,671.1C904.0,606.4 902.7,512.4 907.2,447.5C907.4,445.2 912.7,447.4 915.0,447.3C917.4,447.1 920.5,447.1 922.8,446.8C925.2,446.4 928.2,445.2 930.6,445.0C932.9,444.8 936.1,445.2 938.4,445.5C940.7,445.8 943.9,447.0 946.2,446.8C948.6,446.5 951.5,444.4 953.9,443.7C956.2,443.1 961.6,440.2 961.7,442.5C966.2,508.6 965.0,606.8 969.5,671.6C969.7,674.2 975.0,666.9 977.3,667.1C979.7,667.3 982.6,672.6 985.1,672.9C987.3,673.2 990.4,669.3 992.8,669.1C995.1,668.9 1000.0,673.7 1000.6,671.7C1004.7,659.2 1004.4,633.3 1008.4,620.7C1009.0,618.7 1013.8,622.9 1016.2,623.2C1018.5,623.6 1021.6,623.2 1024.0,623.2C1026.3,623.2 1029.4,623.2 1031.8,623.2C1034.1,623.3 1037.3,624.0 1039.5,623.8C1041.9,623.4 1045.0,622.0 1047.3,621.2C1049.6,620.5 1052.8,618.7 1055.1,618.7C1057.4,618.7 1060.5,621.2 1062.9,621.2C1065.2,621.3 1068.3,619.6 1070.7,619.2C1073.0,618.8 1076.1,618.7 1078.4,618.7C1080.8,618.7 1083.9,619.2 1086.2,619.2C1088.6,619.2 1093.8,621.0 1094.0,618.7C1098.5,554.7 1097.3,462.4 1101.8,398.3C1101.9,396.0 1108.9,395.6 1109.6,397.5C1113.6,410.1 1113.3,434.3 1117.3,446.8C1118.0,448.7 1122.9,445.1 1125.1,445.5C1127.6,446.0 1130.4,448.9 1132.9,449.8C1135.1,450.6 1138.3,450.9 1140.7,451.0C1143.0,451.2 1146.2,451.0 1148.5,450.5C1150.9,450.1 1156.1,445.7 1156.2,448.0C1160.8,512.4 1159.5,607.4 1164.0,673.0C1164.2,675.3 1169.5,674.0 1171.8,674.2C1174.1,674.5 1177.3,674.4 1179.6,674.7C1182.0,675.1 1185.2,677.2 1187.4,676.8C1189.9,676.3 1192.6,672.3 1195.2,671.7C1197.3,671.2 1200.6,672.9 1202.9,673.0C1205.3,673.0 1208.5,672.8 1210.7,672.2C1213.2,671.5 1216.3,668.5 1218.5,668.7C1220.9,668.9 1223.8,672.4 1226.3,673.7C1228.5,674.9 1232.0,675.4 1234.1,676.8C1236.7,678.4 1239.3,683.2 1241.8,683.8C1243.9,684.3 1248.5,682.6 1249.6,680.5C1253.2,673.6 1254.7,654.8 1257.4,653.5C1259.4,652.6 1262.0,670.0 1265.2,673.0C1266.6,674.3 1270.9,667.4 1273.0,667.9C1275.6,668.6 1278.8,673.8 1280.8,676.8C1283.5,681.0 1288.2,696.3 1288.5,691.9C1292.9,630.6 1291.8,523.5 1296.3,457.6C1296.5,454.9 1302.3,461.0 1304.1,463.2C1306.9,466.5 1309.5,472.0 1311.9,475.8C1314.2,479.6 1316.8,487.2 1319.7,488.4C1321.5,489.2 1325.1,482.6 1327.4,482.6C1329.8,482.6 1334.0,490.0 1335.2,488.4C1338.7,483.8 1341.6,470.0 1343.0,461.9C1346.3,442.8 1349.2,391.1 1350.8,397.5C1353.9,410.5 1354.8,502.2 1358.6,526.6C1359.4,532.3 1365.1,493.3 1366.3,497.6C1369.8,509.2 1370.8,569.3 1374.1,579.6C1375.5,583.9 1380.5,542.0 1381.9,546.0C1385.1,555.2 1385.9,609.3 1389.7,623.8C1390.6,627.3 1397.0,611.8 1397.5,606.1C1401.7,554.2 1401.2,483.6 1405.2,431.6C1405.8,424.1 1409.7,411.6 1413.0,407.6C1414.3,406.1 1419.8,415.3 1420.8,413.4C1424.5,406.6 1426.5,389.1 1428.6,378.6C1431.1,366.2 1434.0,337.2 1436.4,337.0C1438.7,336.8 1440.2,367.1 1444.2,377.3C1444.9,379.2 1451.0,375.4 1451.9,377.3C1455.7,384.5 1456.5,398.9 1459.7,407.5C1461.1,411.4 1465.0,418.5 1467.5,418.9C1469.7,419.2 1472.6,412.3 1475.3,410.1C1477.3,408.3 1482.1,403.7 1483.1,405.5C1486.8,412.3 1487.6,434.5 1490.8,438.6C1492.3,440.4 1495.6,427.1 1498.6,425.2C1500.3,424.2 1504.1,427.9 1506.4,429.0C1508.7,430.1 1511.9,431.6 1514.2,432.8C1516.5,433.9 1521.8,434.0 1522.0,436.6C1526.4,497.0 1525.3,581.7 1529.8,642.6C1530.0,645.8 1535.3,647.8 1537.5,650.2C1540.0,652.8 1544.5,662.0 1545.3,659.5C1549.2,647.3 1551.9,618.6 1553.1,600.9C1556.6,547.6 1556.5,475.3 1560.9,422.7C1561.2,419.2 1566.8,413.0 1568.7,413.8C1571.5,415.2 1574.0,425.4 1576.4,430.3C1578.7,434.7 1582.7,446.8 1584.2,444.9C1587.4,440.8 1590.4,406.6 1592.0,410.1C1595.1,416.6 1597.2,476.0 1599.8,478.2C1601.9,480.0 1603.7,439.0 1607.6,423.2C1608.4,419.7 1614.1,417.2 1615.3,413.8C1618.8,404.7 1619.5,387.7 1623.1,381.5C1624.2,379.7 1629.3,385.0 1630.9,387.4C1634.0,391.9 1636.5,404.8 1638.7,404.5C1641.1,404.2 1644.6,384.0 1646.5,385.3C1649.3,387.4 1650.6,409.8 1654.2,415.9C1655.3,417.6 1659.5,411.8 1662.0,411.3C1664.2,410.9 1669.6,410.3 1669.8,412.6C1674.3,473.2 1673.5,558.8 1677.6,621.1C1678.2,630.3 1682.5,648.6 1685.4,650.7C1687.2,652.0 1691.3,631.2 1693.2,632.5C1696.0,634.5 1699.5,652.6 1700.9,661.5C1704.1,680.7 1706.5,726.6 1708.7,725.9C1711.1,725.1 1715.2,677.4 1716.5,656.5C1719.8,604.2 1720.5,534.2 1724.3,482.0C1725.2,469.7 1729.6,442.4 1732.1,441.6C1734.2,440.9 1738.4,481.1 1739.8,476.9C1743.1,467.5 1743.8,420.0 1747.6,396.2C1748.4,391.2 1754.5,377.9 1755.4,381.0C1759.2,394.1 1759.5,430.0 1763.2,450.4C1764.2,456.1 1767.8,463.5 1771.0,468.1C1772.5,470.3 1777.3,470.9 1778.8,473.2C1782.0,478.2 1785.4,496.0 1786.5,492.6C1790.1,481.3 1791.3,430.4 1794.3,423.9C1795.9,420.5 1800.0,460.8 1802.1,459.8C1804.6,458.5 1806.5,429.0 1809.9,416.4C1811.1,411.7 1814.5,404.8 1817.7,402.0C1819.2,400.6 1824.7,404.4 1825.4,402.5C1829.4,391.3 1830.3,361.7 1833.2,358.3C1835.0,356.3 1839.6,376.3 1841.0,384.3C1844.2,402.6 1844.7,430.2 1848.8,445.9C1849.3,448.0 1855.1,442.3 1856.6,443.6C1859.8,446.7 1861.2,458.2 1864.3,460.5C1865.9,461.7 1872.1,455.5 1872.1,455.5" fill="none" stroke="#008000" stroke-width="2" stroke-linejoin="round"/>
<path d="M596.0,635.5C596.0,635.5 602.2,635.9 603.8,637.5C606.9,640.7 608.5,648.3 611.6,651.4C613.1,653.0 617.0,653.1 619.3,653.4C621.6,653.7 625.5,654.7 627.1,653.4C630.2,651.1 631.9,643.2 634.9,641.3C636.6,640.3 640.8,642.4 642.7,643.8C645.5,646.0 647.6,651.6 650.5,653.2C652.3,654.2 656.6,654.0 658.2,652.7C661.3,650.1 663.0,642.4 666.0,640.1C667.6,638.8 672.3,639.4 673.8,640.8C676.9,643.7 678.6,652.5 681.6,654.4C683.2,655.5 687.3,652.4 689.4,650.9C692.0,649.1 695.1,642.9 697.2,643.3C699.7,643.9 702.0,652.1 704.9,654.4C706.7,655.8 712.5,658.2 712.7,656.0C717.2,595.5 716.0,506.4 720.5,445.5C720.7,443.2 726.0,445.8 728.3,445.5C730.6,445.2 733.7,443.9 736.1,443.7C738.4,443.5 741.5,444.3 743.8,444.2C746.2,444.1 749.3,443.5 751.6,443.0C754.0,442.5 757.0,441.1 759.4,440.9C761.7,440.8 764.9,442.3 767.2,442.2C769.5,442.1 774.8,438.2 775.0,440.4C779.5,502.3 778.2,593.4 782.8,656.0C782.9,658.2 788.4,657.1 790.5,656.5C793.1,655.7 795.8,652.0 798.3,651.4C800.5,650.9 803.7,652.5 806.1,652.7C808.4,652.9 811.5,652.9 813.9,652.9C816.2,652.9 819.4,652.2 821.7,652.7C824.1,653.2 827.0,655.9 829.4,656.5C831.6,657.0 834.9,656.7 837.2,656.5C839.6,656.3 842.7,655.2 845.0,655.2C847.3,655.2 850.4,656.6 852.8,656.7C855.1,656.8 858.2,656.2 860.6,656.0C862.9,655.8 866.0,655.3 868.3,655.5C870.7,655.6 873.8,657.0 876.1,657.0C878.5,656.9 881.5,655.5 883.9,655.2C886.2,654.9 889.4,654.8 891.7,654.7C894.0,654.6 899.3,656.9 899.5,654.7C904.0,593.8 902.7,505.3 907.2,444.2C907.4,442.0 912.7,443.9 915.0,443.5C917.4,443.0 920.5,441.3 922.8,441.2C925.1,441.1 928.4,443.3 930.6,443.0C933.0,442.7 935.9,439.8 938.4,439.2C940.6,438.6 943.9,438.9 946.2,439.2C948.5,439.5 951.6,441.1 953.9,441.2C956.3,441.3 961.6,437.4 961.7,439.7C966.2,502.1 965.0,594.0 969.5,657.0C969.7,659.2 974.9,657.1 977.3,657.2C979.6,657.3 982.7,657.7 985.1,657.7C987.4,657.7 990.5,657.2 992.8,657.2C995.2,657.2 999.8,659.7 1000.6,657.8C1004.5,648.5 1004.5,628.9 1008.4,620.0C1009.2,618.1 1013.8,621.9 1016.2,622.0C1018.5,622.1 1021.6,620.7 1024.0,620.5C1026.3,620.3 1029.4,620.9 1031.8,620.7C1034.1,620.6 1037.2,619.8 1039.5,619.5C1041.9,619.1 1045.0,617.9 1047.3,618.2C1049.7,618.5 1052.7,621.0 1055.1,621.2C1057.4,621.5 1060.5,620.3 1062.9,620.0C1065.2,619.6 1068.3,619.2 1070.7,618.7C1073.0,618.2 1076.1,617.3 1078.4,616.9C1080.7,616.6 1084.2,617.1 1086.2,616.2C1088.8,615.0 1093.8,612.8 1094.0,609.9C1098.5,548.7 1097.3,463.6 1101.8,402.6C1102.0,399.9 1108.8,395.5 1109.6,397.5C1113.5,407.8 1113.3,432.0 1117.3,443.7C1118.0,445.7 1122.9,442.5 1125.1,443.0C1127.6,443.4 1130.5,446.4 1132.9,446.8C1135.1,447.0 1138.4,444.8 1140.7,445.0C1143.1,445.2 1146.1,447.8 1148.5,448.0C1150.8,448.2 1156.1,444.0 1156.2,446.2C1160.7,506.8 1159.5,596.6 1164.0,657.3C1164.2,659.6 1169.7,655.6 1171.8,656.1C1174.3,656.6 1177.1,660.1 1179.6,660.9C1181.7,661.5 1185.2,661.4 1187.4,660.9C1189.8,660.3 1192.7,657.7 1195.2,657.1C1197.4,656.5 1200.6,656.8 1202.9,656.6C1205.3,656.4 1208.4,655.5 1210.7,655.8C1213.1,656.1 1216.1,658.4 1218.5,658.6C1220.8,658.8 1224.1,657.9 1226.3,657.1C1228.7,656.1 1232.4,651.7 1234.1,652.8C1237.1,654.7 1238.7,664.6 1241.8,667.2C1243.4,668.4 1247.7,666.6 1249.6,665.4C1252.4,663.6 1254.8,659.2 1257.4,657.1C1259.5,655.4 1263.1,652.2 1265.2,652.8C1267.8,653.5 1271.6,662.7 1273.0,661.1C1276.3,657.4 1278.8,633.6 1280.8,635.1C1283.5,637.2 1287.9,681.4 1288.5,673.0C1292.6,620.3 1292.1,490.7 1296.3,431.6C1296.8,425.4 1301.5,448.5 1304.1,455.6C1306.2,461.4 1309.1,473.2 1311.9,474.5C1313.8,475.4 1317.0,463.9 1319.7,463.2C1321.7,462.6 1325.1,467.9 1327.4,470.0C1329.8,472.0 1333.1,476.9 1335.2,476.5C1337.8,476.0 1342.4,470.5 1343.0,466.9C1347.0,444.8 1348.6,389.6 1350.8,390.7C1353.2,391.9 1354.7,449.8 1358.6,474.5C1359.3,479.5 1365.4,484.7 1366.3,489.7C1370.1,509.0 1371.2,550.9 1374.1,555.6C1375.9,558.5 1380.7,509.5 1381.9,515.2C1385.3,531.0 1386.1,608.7 1389.7,627.5C1390.7,633.0 1396.8,605.7 1397.5,596.0C1401.5,532.5 1400.9,446.7 1405.2,383.7C1405.5,379.7 1411.8,370.7 1413.0,372.8C1416.5,379.0 1419.0,414.0 1420.8,411.4C1423.6,407.5 1424.9,362.1 1428.6,351.4C1429.6,348.4 1435.2,361.2 1436.4,366.0C1439.9,380.3 1441.0,409.8 1444.2,415.1C1445.7,417.7 1449.5,392.6 1451.9,392.4C1454.2,392.2 1456.8,407.7 1459.7,413.8C1461.4,417.4 1464.8,423.9 1467.5,424.7C1469.5,425.3 1473.1,420.4 1475.3,418.4C1477.7,416.2 1482.0,408.6 1483.1,410.6C1486.6,416.9 1487.1,438.4 1490.8,445.9C1491.8,447.7 1496.2,441.9 1498.6,441.6C1500.9,441.4 1504.8,442.5 1506.4,444.1C1509.5,447.4 1512.4,459.2 1514.2,458.0C1517.0,456.2 1521.5,428.1 1522.0,434.0C1526.1,483.4 1525.4,580.6 1529.8,642.6C1530.1,647.0 1534.9,651.6 1537.5,655.2C1539.6,658.1 1544.6,666.6 1545.3,664.0C1549.3,650.3 1551.7,620.0 1553.1,600.9C1556.3,557.8 1556.6,499.2 1560.9,456.8C1561.2,453.2 1566.9,446.4 1568.7,447.4C1571.5,449.1 1573.3,462.9 1576.4,465.6C1577.9,466.8 1583.2,463.0 1584.2,460.5C1587.8,452.1 1590.3,426.7 1592.0,429.5C1595.0,434.5 1597.3,485.3 1599.8,486.5C1601.9,487.6 1604.2,451.8 1607.6,437.3C1608.8,431.9 1612.6,425.1 1615.3,420.2C1617.3,416.5 1620.3,411.7 1623.1,408.8C1625.0,407.0 1629.0,403.7 1630.9,404.5C1633.7,405.6 1635.8,413.7 1638.7,415.1C1640.5,416.0 1644.7,411.1 1646.5,412.1C1649.4,413.8 1651.8,423.7 1654.2,423.9C1656.5,424.2 1659.4,416.6 1662.0,413.8C1664.1,411.7 1669.6,404.7 1669.8,407.5C1674.3,471.5 1673.4,567.9 1677.6,636.3C1678.1,644.9 1682.9,663.4 1685.4,664.0C1687.6,664.6 1690.4,641.4 1693.2,640.1C1695.1,639.1 1699.8,651.2 1700.9,656.5C1704.5,673.4 1706.5,714.7 1708.7,714.0C1711.1,713.2 1715.3,670.3 1716.5,651.4C1720.0,594.3 1720.3,517.6 1724.3,460.5C1725.0,450.3 1729.4,428.6 1732.1,427.2C1734.1,426.1 1738.5,455.5 1739.8,452.2C1743.1,444.3 1743.5,406.9 1747.6,389.9C1748.2,387.7 1754.5,386.3 1755.4,388.1C1759.2,396.1 1760.0,412.6 1763.2,422.7C1764.7,427.5 1769.0,433.1 1771.0,437.8C1773.7,444.5 1776.7,453.6 1778.8,460.5C1781.3,469.2 1785.1,493.1 1786.5,489.6C1789.8,481.7 1791.0,431.3 1794.3,422.7C1795.7,419.2 1800.0,450.0 1802.1,449.2C1804.6,448.2 1806.2,423.7 1809.9,416.9C1810.8,415.1 1815.2,420.3 1817.7,420.7C1819.9,421.0 1824.4,420.8 1825.4,418.9C1829.1,412.0 1830.1,399.1 1833.2,391.1C1834.8,387.2 1840.3,375.8 1841.0,379.0C1845.0,398.7 1845.1,451.9 1848.8,467.4C1849.8,471.5 1854.0,445.3 1856.6,444.6C1858.7,444.1 1861.3,458.0 1864.3,463.1C1866.0,465.7 1872.1,470.1 1872.1,470.1" fill="none" stroke="#ff0000" stroke-width="2" stroke-linejoin="round"/>
<circle cx="596.0" cy="575.7" r="1.6" fill="#fff" stroke="#ffff00" stroke-width="1"/>
<circle cx="634.9" cy="611.0" r="1.6" fill="#fff" stroke="#ffff00" stroke-width="1"/>
<circle cx="673.8" cy="577.7" r="1.6" fill="#fff" stroke="#ffff00" stroke-width="1"/>
<circle cx="712.7" cy="587.8" r="1.6" fill="#fff" stroke="#ffff00" stroke-width="1"/>
<circle cx="751.6" cy="408.9" r="1.6" fill="#fff" stroke="#ffff00" stroke-width="1"/>
<circle cx="790.5" cy="587.6" r="1.6" fill="#fff" stroke="#ffff00" stroke-width="1"/>
<circle cx="829.4" cy="604.2" r="1.6" fill="#fff" stroke="#ffff00" stroke-width="1"/>
<circle cx="868.3" cy="598.9" r="1.6" fill="#fff" stroke="#ffff00" stroke-width="1"/>
<circle cx="907.2" cy="409.4" r="1.6" fill="#fff" stroke="#ffff00" stroke-width="1"/>
<circle cx="946.2" cy="397.5" r="1.6" fill="#fff" stroke="#ffff00" stroke-width="1"/>
<circle cx="985.1" cy="600.2" r="1.6" fill="#fff" stroke="#ffff00" stroke-width="1"/>
<circle cx="1024.0" cy="569.5" r="1.6" fill="#fff" stroke="#ffff00" stroke-width="1"/>
<circle cx="1062.9" cy="577.8" r="1.6" fill="#fff" stroke="#ffff00" stroke-width="1"/>
<circle cx="1101.8" cy="370.3" r="1.6" fill="#fff" stroke="#ffff00" stroke-width="1"/>
<circle cx="1140.7" cy="413.9" r="1.6" fill="#fff" stroke="#ffff00" stroke-width="1"/>
<circle cx="1179.6" cy="609.9" r="1.6" fill="#fff" stroke="#ffff00" stroke-width="1"/>
<circle cx="1218.5" cy="599.8" r="1.6" fill="#fff" stroke="#ffff00" stroke-width="1"/>
<circle cx="1257.4" cy="606.8" r="1.6" fill="#fff" stroke="#ffff00" stroke-width="1"/>
<circle cx="1296.3" cy="388.7" r="1.6" fill="#fff" stroke="#ffff00" stroke-width="1"/>
<circle cx="1335.2" cy="413.4" r="1.6" fill="#fff" stroke="#ffff00" stroke-width="1"/>
<circle cx="1374.1" cy="481.6" r="1.6" fill="#fff" stroke="#ffff00" stroke-width="1"/>
<circle cx="1413.0" cy="349.6" r="1.6" fill="#fff" stroke="#ffff00" stroke-width="1"/>
<circle cx="1451.9" cy="367.2" r="1.6" fill="#fff" stroke="#ffff00" stroke-width="1"/>
<circle cx="1490.8" cy="392.4" r="1.6" fill="#fff" stroke="#ffff00" stroke-width="1"/>
<circle cx="1529.8" cy="539.1" r="1.6" fill="#fff" stroke="#ffff00" stroke-width="1"/>
<circle cx="1568.7" cy="346.5" r="1.6" fill="#fff" stroke="#ffff00" stroke-width="1"/>
<circle cx="1607.6" cy="383.6" r="1.6" fill="#fff" stroke="#ffff00" stroke-width="1"/>
<circle cx="1646.5" cy="355.8" r="1.6" fill="#fff" stroke="#ffff00" stroke-width="1"/>
<circle cx="1685.4" cy="558.5" r="1.6" fill="#fff" stroke="#ffff00" stroke-width="1"/>
<circle cx="1724.3" cy="440.9" r="1.6" fill="#fff" stroke="#ffff00" stroke-width="1"/>
<circle cx="1763.2" cy="445.4" r="1.6" fill="#fff" stroke="#ffff00" stroke-width="1"/>
<circle cx="1802.1" cy="451.7" r="1.6" fill="#fff" stroke="#ffff00" stroke-width="1"/>
<circle cx="1841.0" cy="393.7" r="1.6" fill="#fff" stroke="#ffff00" stroke-width="1"/>
<circle cx="596.0" cy="669.1" r="1.6" fill="#fff" stroke="#008000" stroke-width="1"/>
<circle cx="634.9" cy="663.5" r="1.6" fill="#fff" stroke="#008000" stroke-width="1"/>
<circle cx="673.8" cy="668.1" r="1.6" fill="#fff" stroke="#008000" stroke-width="1"/>
<circle cx="712.7" cy="669.1" r="1.6" fill="#fff" stroke="#008000" stroke-width="1"/>
<circle cx="751.6" cy="448.0" r="1.6" fill="#fff" stroke="#008000" stroke-width="1"/>
<circle cx="790.5" cy="668.6" r="1.6" fill="#fff" stroke="#008000" stroke-width="1"/>
<circle cx="829.4" cy="661.5" r="1.6" fill="#fff" stroke="#008000" stroke-width="1"/>
<circle cx="868.3" cy="670.9" r="1.6" fill="#fff" stroke="#008000" stroke-width="1"/>
<circle cx="907.2" cy="447.5" r="1.6" fill="#fff" stroke="#008000" stroke-width="1"/>
<circle cx="946.2" cy="446.8" r="1.6" fill="#fff" stroke="#008000" stroke-width="1"/>
<circle cx="985.1" cy="672.9" r="1.6" fill="#fff" stroke="#008000" stroke-width="1"/>
<circle cx="1024.0" cy="623.2" r="1.6" fill="#fff" stroke="#008000" stroke-width="1"/>
<circle cx="1062.9" cy="621.2" r="1.6" fill="#fff" stroke="#008000" stroke-width="1"/>
<circle cx="1101.8" cy="398.3" r="1.6" fill="#fff" stroke="#008000" stroke-width="1"/>
<circle cx="1140.7" cy="451.0" r="1.6" fill="#fff" stroke="#008000" stroke-width="1"/>
<circle cx="1179.6" cy="674.7" r="1.6" fill="#fff" stroke="#008000" stroke-width="1"/>
<circle cx="1218.5" cy="668.7" r="1.6" fill="#fff" stroke="#008000" stroke-width="1"/>
<circle cx="1257.4" cy="653.5" r="1.6" fill="#fff" stroke="#008000" stroke-width="1"/>
<circle cx="1296.3" cy="457.6" r="1.6" fill="#fff" stroke="#008000" stroke-width="1"/>
<circle cx="1335.2" cy="488.4" r="1.6" fill="#fff" stroke="#008000" stroke-width="1"/>
<circle cx="1374.1" cy="579.6" r="1.6" fill="#fff" stroke="#008000" stroke-width="1"/>
<circle cx="1413.0" cy="407.6" r="1.6" fill="#fff" stroke="#008000" stroke-width="1"/>
<circle cx="1451.9" cy="377.3" r="1.6" fill="#fff" stroke="#008000" stroke-width="1"/>
<circle cx="1490.8" cy="438.6" r="1.6" fill="#fff" stroke="#008000" stroke-width="1"/>
<circle cx="1529.8" cy="642.6" r="1.6" fill="#fff" stroke="#008000" stroke-width="1"/>
<circle cx="1568.7" cy="413.8" r="1.6" fill="#fff" stroke="#008000" stroke-width="1"/>
<circle cx="1607.6" cy="423.2" r="1.6" fill="#fff" stroke="#008000" stroke-width="1"/>
<circle cx="1646.5" cy="385.3" r="1.6" fill="#fff" stroke="#008000" stroke-width="1"/>
<circle cx="1685.4" cy="650.7" r="1.6" fill="#fff" stroke="#008000" stroke-width="1"/>
<circle cx="1724.3" cy="482.0" r="1.6" fill="#fff" stroke="#008000" stroke-width="1"/>
<circle cx="1763.2" cy="450.4" r="1.6" fill="#fff" stroke="#008000" stroke-width="1"/>
<circle cx="1802.1" cy="459.8" r="1.6" fill="#fff" stroke="#008000" stroke-width="1"/>
<circle cx="1841.0" cy="384.3" r="1.6" fill="#fff" stroke="#008000" stroke-width="1"/>
<circle cx="596.0" cy="635.5" r="1.6" fill="#fff" stroke="#ff0000" stroke-width="1"/>
<circle cx="634.9" cy="641.3" r="1.6" fill="#fff" stroke="#ff0000" stroke-width="1"/>
<circle cx="673.8" cy="640.8" r="1.6" fill="#fff" stroke="#ff0000" stroke-width="1"/>
<circle cx="712.7" cy="656.0" r="1.6" fill="#fff" stroke="#ff0000" stroke-width="1"/>
<circle cx="751.6" cy="443.0" r="1.6" fill="#fff" stroke="#ff0000" stroke-width="1"/>
<circle cx="790.5" cy="656.5" r="1.6" fill="#fff" stroke="#ff0000" stroke-width="1"/>
<circle cx="829.4" cy="656.5" r="1.6" fill="#fff" stroke="#ff0000" stroke-width="1"/>
<circle cx="868.3" cy="655.5" r="1.6" fill="#fff" stroke="#ff0000" stroke-width="1"/>
<circle cx="907.2" cy="444.2" r="1.6" fill="#fff" stroke="#ff0000" stroke-width="1"/>
<circle cx="946.2" cy="439.2" r="1.6" fill="#fff" stroke="#ff0000" stroke-width="1"/>
<circle cx="985.1" cy="657.7" r="1.6" fill="#fff" stroke="#ff0000" stroke-width="1"/>
<circle cx="1024.0" cy="620.5" r="1.6" fill="#fff" stroke="#ff0000" stroke-width="1"/>
<circle cx="1062.9" cy="620.0" r="1.6" fill="#fff" stroke="#ff0000" stroke-width="1"/>
<circle cx="1101.8" cy="402.6" r="1.6" fill="#fff" stroke="#ff0000" stroke-width="1"/>
<circle cx="1140.7" cy="445.0" r="1.6" fill="#fff" stroke="#ff0000" stroke-width="1"/>
<circle cx="1179.6" cy="660.9" r="1.6" fill="#fff" stroke="#ff0000" stroke-width="1"/>
<circle cx="1218.5" cy="658.6" r="1.6" fill="#fff" stroke="#ff0000" stroke-width="1"/>
<circle cx="1257.4" cy="657.1" r="1.6" fill="#fff" stroke="#ff0000" stroke-width="1"/>
<circle cx="1296.3" cy="431.6" r="1.6" fill="#fff" stroke="#ff0000" stroke-width="1"/>
<circle cx="1335.2" cy="476.5" r="1.6" fill="#fff" stroke="#ff0000" stroke-width="1"/>
<circle cx="1374.1" cy="555.6" r="1.6" fill="#fff" stroke="#ff0000" stroke-width="1"/>
<circle cx="1413.0" cy="372.8" r="1.6" fill="#fff" stroke="#ff0000" stroke-width="1"/>
<circle cx="1451.9" cy="392.4" r="1.6" fill="#fff" stroke="#ff0000" stroke-width="1"/>
<circle cx="1490.8" cy="445.9" r="1.6" fill="#fff" stroke="#ff0000" stroke-width="1"/>
<circle cx="1529.8" cy="642.6" r="1.6" fill="#fff" stroke="#ff0000" stroke-width="1"/>
<circle cx="1568.7" cy="447.4" r="1.6" fill="#fff" stroke="#ff0000" stroke-width="1"/>
<circle cx="1607.6" cy="437.3" r="1.6" fill="#fff" stroke="#ff0000" stroke-width="1"/>
<circle cx="1646.5" cy="412.1" r="1.6" fill="#fff" stroke="#ff0000" stroke-width="1"/>
<circle cx="1685.4" cy="664.0" r="1.6" fill="#fff" stroke="#ff0000" stroke-width="1"/>
<circle cx="1724.3" cy="460.5" r="1.6" fill="#fff" stroke="#ff0000" stroke-width="1"/>
<circle cx="1763.2" cy="422.7" r="1.6" fill="#fff" stroke="#ff0000" stroke-width="1"/>
<circle cx="1802.1" cy="449.2" r="1.6" fill="#fff" stroke="#ff0000" stroke-width="1"/>
<circle cx="1841.0" cy="379.0" r="1.6" fill="#fff" stroke="#ff0000" stroke-width="1"/>
<path d="M1143.5,854H1168.5" stroke="#ffff00" stroke-width="1.2"/>
<circle cx="1156.0" cy="854" r="5.6" fill="#fff" stroke="#ffff00" stroke-width="1.4"/>
<text x="1173.5" y="860.5" font-family="'Liberation Serif',serif" font-size="13" fill="#333">Ia</text>
<path d="M1194.5,854H1219.5" stroke="#008000" stroke-width="1.2"/>
<circle cx="1207.0" cy="854" r="5.6" fill="#fff" stroke="#008000" stroke-width="1.4"/>
<text x="1224.5" y="860.5" font-family="'Liberation Serif',serif" font-size="13" fill="#333">Ib</text>
<path d="M1246,854H1271" stroke="#ff0000" stroke-width="1.2"/>
<circle cx="1258.5" cy="854" r="5.6" fill="#fff" stroke="#ff0000" stroke-width="1.4"/>
<text x="1276" y="860.5" font-family="'Liberation Serif',serif" font-size="13" fill="#333">Ic</text>
<g fill="none" stroke="#2ec7c9" stroke-width="1.2"><path d="M1865.5,269V281M1860,275.5L1865.5,281L1871,275.5M1859.5,279.5V283.5H1871.5V279.5"/><path d="M1884.5,269.5H1891.5L1895.5,273.5V283.5H1884.5ZM1891.5,269.5V273.5H1895.5M1886.5,273.5H1890M1886.5,276.5H1893.5M1886.5,279.5H1893.5"/></g>
</svg>
  </div>

  <div id="rline"></div>
  <div id="footer"><span class="copy">2017@Acrel</span><div id="bell"><svg width="50" height="36" viewBox="0 0 50 36" fill="none" stroke="#f0b92d" stroke-width="2.2" stroke-linecap="round"><path d="M9.4,2.8 Q-3.2,16.2 10.4,29.6"/><path d="M14,6.6 Q5.4,16.2 14.8,26.2"/><path d="M35,6.6 Q43.6,16.2 34.2,26.2"/><path d="M39.6,2.8 Q52.2,16.2 38.6,29.6"/><path d="M24.4,6.7 C21.4,6.7 20,8.6 19.6,11.2 L18.6,17.6 L16.2,21.6 H32.8 L30.4,17.6 L29.4,11.2 C29,8.6 27.4,6.7 24.4,6.7 Z" fill="#f0b92d" stroke="none"/><path d="M22,22.4 A2.5,2.5 0 0 0 27,22.4 Z" fill="#f0b92d" stroke="none"/></svg></div></div>
</div>
</body>
</html>
